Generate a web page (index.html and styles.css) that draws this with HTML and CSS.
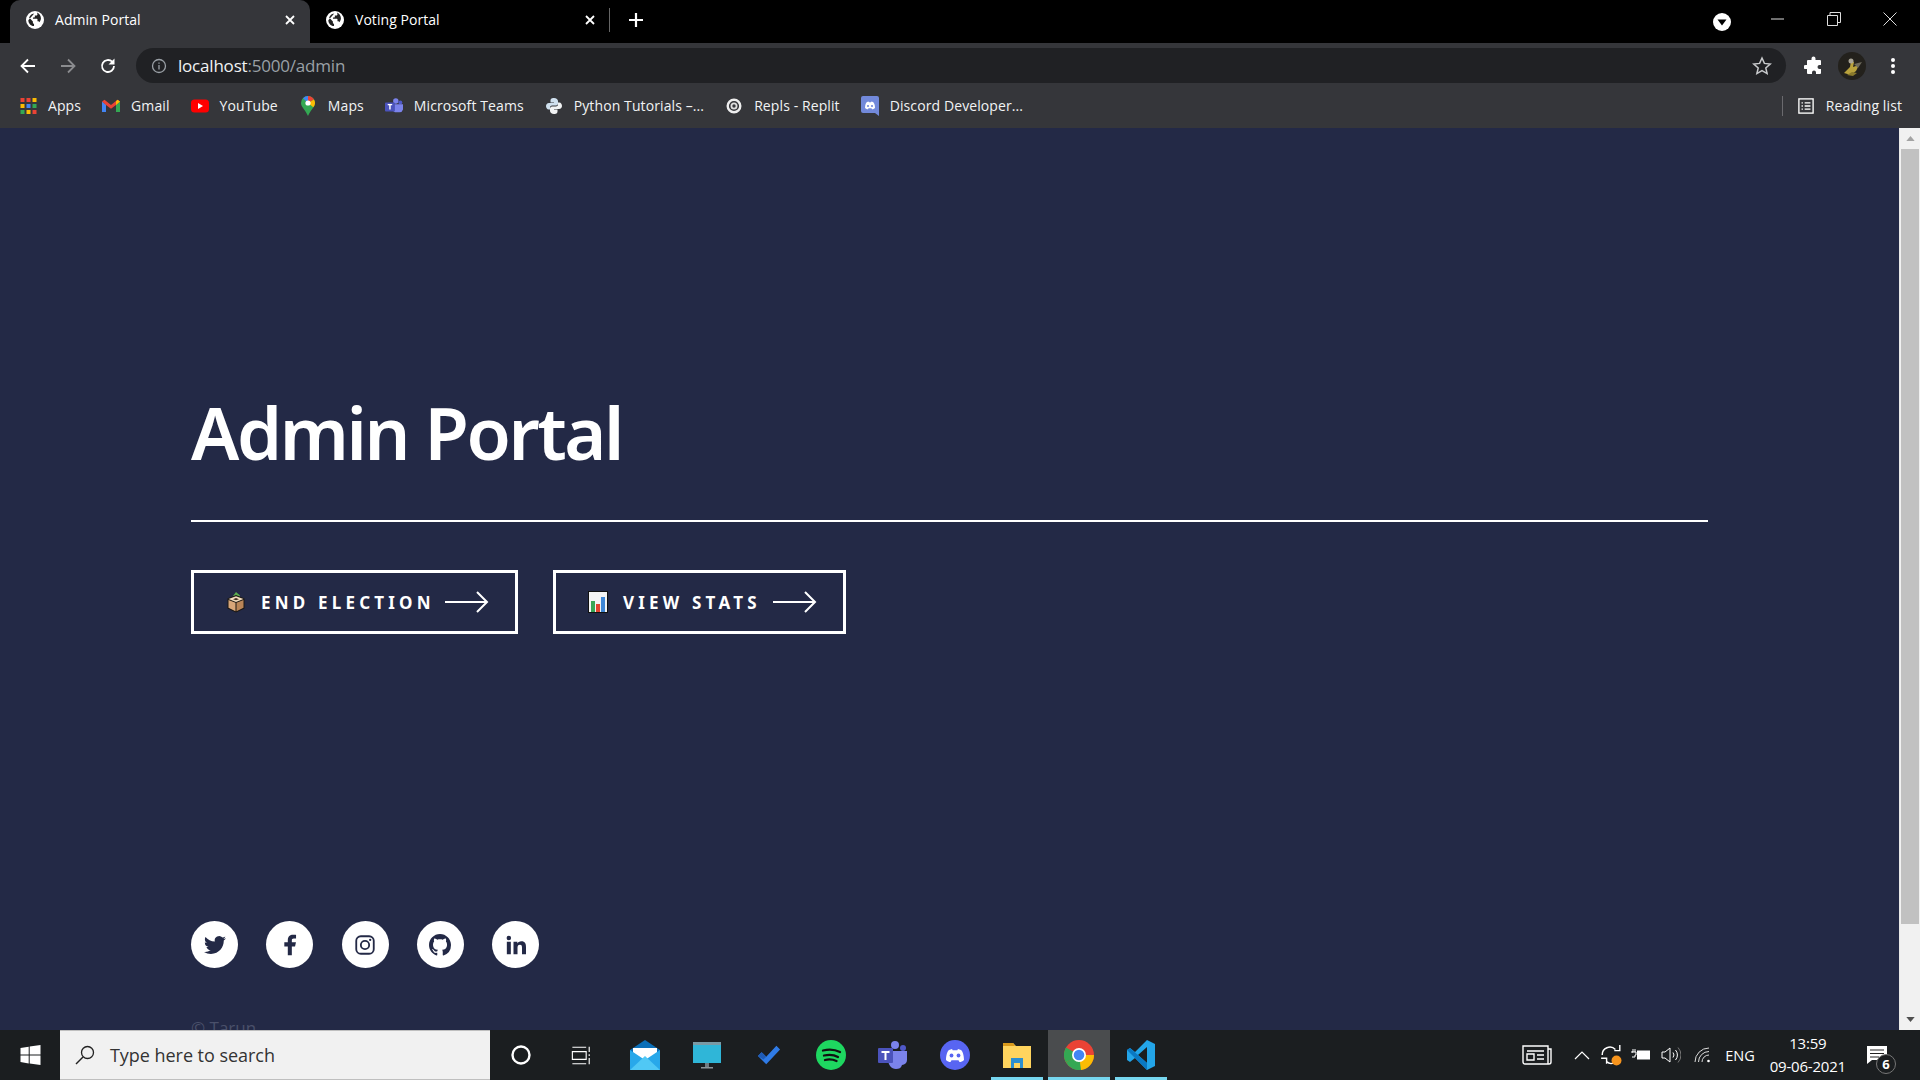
FILE: index.html
```html
<!DOCTYPE html>
<html lang="en">
<head>
<meta charset="utf-8">
<title>Admin Portal</title>
<link rel="stylesheet" href="styles.css">
</head>
<body>
<svg class="defs" width="0" height="0" aria-hidden="true">
  <symbol id="globe" viewBox="0 0 24 24"><circle cx="12" cy="12" r="12" fill="#fff"/><path fill="#222" d="M11 3.200c-1.800.2-3.600 1-4.900 2.300-.9 1-1.600 2-2 3.200l2.300 2.400 2.800 2.900v1.600c0 .8.700 1.500 1.500 1.500v3C6 19.700 3.200 16.300 3.100 12.300M15.200 3.900v.6c0 .9-.8 1.600-1.700 1.600h-1.700v1.700c0 .5-.4.800-.8.800H9.300v1.700h5.200c.5 0 .8.400.8.800v2.600h.9c.8 0 1.400.5 1.600 1.200 1.300-1.400 2.100-3.200 2.100-5.200 0-3.500-2.100-6.500-5.100-7.800z"/></symbol>
</svg>

<header class="chrome">
  <div class="tabstrip">
    <div class="tab tab-active">
      <svg class="tab-icon"><use href="#globe"/></svg>
      <span class="tab-title">Admin Portal</span>
      <svg class="tab-x" viewBox="0 0 10 10"><path d="M1 1l8 8M9 1L1 9"/></svg>
    </div>
    <div class="tab">
      <svg class="tab-icon"><use href="#globe"/></svg>
      <span class="tab-title">Voting Portal</span>
      <svg class="tab-x" viewBox="0 0 10 10"><path d="M1 1l8 8M9 1L1 9"/></svg>
    </div>
    <div class="tab-sep"></div>
    <svg class="tab-plus" viewBox="0 0 16 16"><path d="M8 1v14M1 8h14"/></svg>
    <div class="strip-fill"></div>
    <svg class="tab-search" viewBox="0 0 18 18"><circle cx="9" cy="9" r="9" fill="#fff"/><path d="M4.500 6.500h9L9 12.500z" fill="#000"/></svg>
    <div class="winctl">
      <svg viewBox="0 0 14 14"><path d="M0 7h13"/></svg>
      <svg viewBox="0 0 14 14"><path d="M.5 3.500h10v10H.5zM3 3.500V.5h10.500v10H10.500"/></svg>
      <svg viewBox="0 0 14 14"><path d="M.5.5l13 13M13.500.5l-13 13"/></svg>
    </div>
  </div>

  <div class="toolbar">
    <svg class="nav" viewBox="0 0 18 18"><path d="M16 9H3M9 2.500L2.500 9 9 15.500"/></svg>
    <svg class="nav nav-off" viewBox="0 0 18 18"><path d="M2 9h13M9 2.500L15.500 9 9 15.500"/></svg>
    <svg class="nav" viewBox="0 0 18 18"><path d="M15 9a6 6 0 1 1-1.800-4.300"/><path class="solid" d="M15.500 1.500v6h-6z"/></svg>
    <div class="omnibox">
      <svg class="info" viewBox="0 0 16 16"><circle cx="8" cy="8" r="6.500"/><path d="M8 7v4.500M8 4.500v1.300"/></svg>
      <span class="url">localhost<span class="url-dim">:5000/admin</span></span>
      <svg class="star" viewBox="0 0 20 20"><path d="M10 2l2.400 5.400 5.800.6-4.400 3.900 1.300 5.700L10 14.700l-5.100 2.900 1.300-5.700L1.800 8l5.800-.6z"/></svg>
    </div>
    <svg class="puzzle" viewBox="0 0 20 20"><path fill="#fff" d="M7.500 2.500a2 2 0 0 1 4 0V4H16a1 1 0 0 1 1 1v4h-1.500a2 2 0 0 0 0 4H17v4a1 1 0 0 1-1 1h-4v-1.500a2 2 0 0 0-4 0V18H4a1 1 0 0 1-1-1v-4H1.500a2 2 0 0 1 0-4H3V5a1 1 0 0 1 1-1h3.500z"/></svg>
    <svg class="avatar" viewBox="0 0 28 28"><circle cx="14" cy="14" r="14" fill="#23211c"/><path d="M6 21l6-6 1-6 3 1-1 5 6-2-3 6-5 4z" fill="#b9a23c"/><path d="M9 23l5-3 5 1-4 3z" fill="#8a7a2c"/><circle cx="13" cy="9" r="2.500" fill="#a8a496"/><path d="M16 12l8-2-4 6z" fill="#6d6a5c"/></svg>
    <svg class="kebab" viewBox="0 0 6 18"><circle cx="3" cy="3" r="2"/><circle cx="3" cy="9" r="2"/><circle cx="3" cy="15" r="2"/></svg>
  </div>

  <nav class="bookmarks">
    <a class="bm bm-apps"><svg viewBox="0 0 16 16"><rect x="0" y="0" width="4" height="4" fill="#ea4335"/><rect x="6" y="0" width="4" height="4" fill="#ea4335"/><rect x="12" y="0" width="4" height="4" fill="#fbbc04"/><rect x="0" y="6" width="4" height="4" fill="#fbbc04"/><rect x="6" y="6" width="4" height="4" fill="#4285f4"/><rect x="12" y="6" width="4" height="4" fill="#34a853"/><rect x="0" y="12" width="4" height="4" fill="#34a853"/><rect x="6" y="12" width="4" height="4" fill="#fbbc04"/><rect x="12" y="12" width="4" height="4" fill="#ea4335"/></svg>Apps</a>
    <a class="bm"><svg viewBox="0 0 18 14"><path d="M0 2.500V13h4V5.500z" fill="#4285f4"/><path d="M18 2.500V13h-4V5.500z" fill="#34a853"/><path d="M0 2.500L2.500.8 9 6l6.500-5.200L18 2.500 14 6 9 9.800 4 6z" fill="#ea4335"/><path d="M14 2.200l1.500-1.400L18 2.500 14 6z" fill="#fbbc04"/></svg>Gmail</a>
    <a class="bm"><svg viewBox="0 0 18 14"><rect width="18" height="13" y=".5" rx="3.500" fill="#f00"/><path d="M7 4l5 3-5 3z" fill="#fff"/></svg>YouTube</a>
    <a class="bm"><svg class="bm-tall" viewBox="0 0 14 20"><path d="M7 0a7 7 0 0 1 7 7c0 4-4.500 7-7 13C4.500 14 0 11 0 7a7 7 0 0 1 7-7z" fill="#34a853"/><path d="M2 2.200A7 7 0 0 1 7 0v7z" fill="#4285f4"/><path d="M7 0a7 7 0 0 1 6 3.500L7 7z" fill="#ea4335"/><path d="M13 3.500A7 7 0 0 1 14 7c0 1.500-.7 3-1.700 4.300L7 7z" fill="#fbbc04"/><circle cx="7" cy="7" r="2.600" fill="#fff"/></svg>Maps</a>
    <a class="bm"><svg class="bm-tall" viewBox="0 0 20 18"><circle cx="12" cy="3.500" r="3" fill="#7b83eb"/><circle cx="17" cy="5" r="2.200" fill="#5059c9"/><path d="M8 7h12v6a4 4 0 0 1-4 3h-3a5 5 0 0 1-5-4z" fill="#7b83eb"/><rect y="5" width="11" height="10" rx="1" fill="#4b53bc"/><path d="M3 7.500h5M5.500 7.500v5.500" stroke="#fff" stroke-width="1.600" fill="none"/></svg>Microsoft Teams</a>
    <a class="bm"><svg viewBox="0 0 16 16"><path d="M8 0C5 0 4.500 1.200 4.500 3v1.500H8V5H3C1 5 0 6.500 0 8s1 3.500 2.700 3.500H4V9.500C4 8.300 5 7.500 6 7.500h4c1 0 2-1 2-2V3c0-1.500-1.500-3-4-3z" fill="#cfe0ee"/><path d="M8 16c3 0 3.500-1.200 3.500-3v-1.500H8V11h5c2 0 3-1.500 3-3s-1-3.500-2.700-3.500H12v2c0 1.200-1 2-2 2H6c-1 0-2 1-2 2V13c0 1.500 1.500 3 4 3z" fill="#f1f3f4"/></svg>Python Tutorials –...</a>
    <a class="bm"><svg viewBox="0 0 16 16"><circle cx="8" cy="8" r="6.300" fill="none" stroke="#eee" stroke-width="2.400"/><circle cx="8" cy="8" r="2.600" fill="none" stroke="#ddd" stroke-width="1.800"/></svg>Repls - Replit</a>
    <a class="bm"><svg class="bm-tall" viewBox="0 0 18 20"><path d="M2 0h14a2 2 0 0 1 2 2v18l-4-3H2a2 2 0 0 1-2-2V2a2 2 0 0 1 2-2z" fill="#7289da"/><path d="M4 12c0-3 1-5.500 2-6l1.500-.5.500.800h2l.5-.800 1.500.5c1 .5 2 3 2 6-1 1-2 1.300-3 1.300l-.5-1h-3l-.5 1c-1 0-2-.300-3-1.300z" fill="#fff"/><circle cx="7" cy="10" r="1.100" fill="#7289da"/><circle cx="11" cy="10" r="1.100" fill="#7289da"/></svg>Discord Developer...</a>
    <div class="bm-fill"></div>
    <div class="bm-sep"></div>
    <a class="bm bm-reading"><svg viewBox="0 0 18 18"><rect x="1" y="1" width="16" height="16" fill="none" stroke="#fff" stroke-width="1.500"/><path d="M4 5.500h1.500M7.500 5.500H14M4 9h1.500M7.500 9H14M4 12.500h1.500M7.500 12.500H14" stroke="#fff" stroke-width="1.500"/></svg>Reading list</a>
  </nav>
</header>

<div class="viewport">
  <main class="page">
    <h1 class="title">Admin Portal</h1>
    <hr class="rule">
    <div class="actions">
      <a class="btn btn-end">
        <svg class="emoji" viewBox="0 0 20 22"><path d="M10 1l4 3.500-2 5.500-3-1-2-4z" fill="#5cae4f"/><path d="M1.500 7.500L10 4l8.500 3.500v10L10 21.500l-8.500-4z" fill="#1b1713"/><path d="M2.500 8L10 5.200 17.500 8 10 11z" fill="#f3dcbd"/><path d="M2.500 9l7 2.800v8.400l-7-3.400z" fill="#d8a679"/><path d="M10.500 11.800l7-2.800v7.800l-7 3.400z" fill="#b98558"/><path d="M7 8.200l3-1.200 3 1.200-3 1.100z" fill="#3f2e20"/></svg>
        <span class="btn-label">END ELECTION</span>
        <svg class="arrow" viewBox="0 0 44 22"><path d="M0 11h42M32 1l10 10-10 10"/></svg>
      </a>
      <a class="btn btn-stats">
        <svg class="emoji" viewBox="0 0 20 22"><rect width="20" height="22" fill="#111"/><rect x="1" y="1" width="18" height="20" fill="#f4f4f4"/><rect x="3" y="10" width="4" height="11" fill="#3aa655"/><rect x="8" y="13" width="4" height="8" fill="#e2432f"/><rect x="13" y="6" width="4" height="15" fill="#3f87d6"/></svg>
        <span class="btn-label">VIEW STATS</span>
        <svg class="arrow" viewBox="0 0 44 22"><path d="M0 11h42M32 1l10 10-10 10"/></svg>
      </a>
    </div>
    <div class="socials">
      <a class="social"><svg class="s-tw" viewBox="0 0 24 24"><path d="M23.953 4.570a10 10 0 0 1-2.825.775 4.958 4.958 0 0 0 2.163-2.723c-.951.555-2.005.959-3.127 1.184a4.920 4.920 0 0 0-8.384 4.482C7.690 8.095 4.067 6.130 1.640 3.162a4.822 4.822 0 0 0-.666 2.475c0 1.710.870 3.213 2.188 4.096a4.904 4.904 0 0 1-2.228-.616v.060a4.923 4.923 0 0 0 3.946 4.827 4.996 4.996 0 0 1-2.212.085 4.936 4.936 0 0 0 4.604 3.417 9.867 9.867 0 0 1-6.102 2.105c-.390 0-.779-.023-1.170-.067a13.995 13.995 0 0 0 7.557 2.209c9.053 0 13.998-7.496 13.998-13.985 0-.210 0-.420-.015-.630A9.935 9.935 0 0 0 24 4.590z"/></svg></a>
      <a class="social"><svg class="s-fb" viewBox="0 0 24 24"><path d="M14 13.500h3.500l1-4.500H14V7c0-1.200.4-2 2.200-2h2.400V1.100C18.200 1 16.800.9 15.300.9 12 .9 9.600 2.900 9.600 6.600V9H5.800v4.500h3.800V23.100H14z"/></svg></a>
      <a class="social"><svg class="s-ig" viewBox="0 0 24 24"><rect x="1.500" y="1.500" width="21" height="21" rx="5.500"/><circle cx="12" cy="12" r="5"/><circle class="dot" cx="18.200" cy="5.800" r="1.400"/></svg></a>
      <a class="social"><svg class="s-gh" viewBox="0 0 16 16"><path d="M8 0C3.580 0 0 3.580 0 8c0 3.540 2.290 6.530 5.470 7.590.4.070.55-.170.55-.380 0-.190-.010-.820-.010-1.490-2.010.370-2.530-.490-2.690-.940-.090-.230-.480-.940-.820-1.130-.280-.150-.680-.520-.010-.530.630-.010 1.080.580 1.230.820.720 1.210 1.870.870 2.330.660.070-.520.280-.870.510-1.070-1.780-.200-3.640-.890-3.640-3.950 0-.870.310-1.590.820-2.150-.080-.200-.360-1.020.080-2.120 0 0 .670-.210 2.200.820.640-.180 1.320-.270 2-.270.680 0 1.360.090 2 .270 1.530-1.040 2.200-.820 2.200-.820.440 1.100.160 1.920.080 2.120.510.560.820 1.270.820 2.150 0 3.070-1.870 3.750-3.650 3.950.290.250.540.730.540 1.480 0 1.070-.010 1.930-.010 2.200 0 .210.150.460.550.380A8.013 8.013 0 0 0 16 8c0-4.420-3.580-8-8-8z"/></svg></a>
      <a class="social"><svg class="s-in" viewBox="0 0 24 24"><path d="M1 8h4.800v15H1zM3.400 1a2.700 2.700 0 1 1 0 5.400 2.700 2.700 0 0 1 0-5.400zM9 8h4.600v2.100c.8-1.300 2.500-2.500 4.800-2.500 4.600 0 5.600 3 5.600 7V23h-4.800v-7.400c0-1.800 0-4-2.500-4s-2.900 1.900-2.900 3.900V23H9z"/></svg></a>
    </div>
    <p class="copyright">© Tarun</p>
  </main>
  <aside class="scrollbar">
    <div class="sb-btn"><svg viewBox="0 0 10 6"><path d="M5 0l5 6H0z"/></svg></div>
    <div class="sb-thumb"></div>
    <div class="sb-track"></div>
    <div class="sb-btn sb-btn-down"><svg viewBox="0 0 10 6"><path d="M0 0h10L5 6z"/></svg></div>
  </aside>
</div>

<footer class="taskbar">
  <div class="start"><svg viewBox="0 0 20 20"><path fill="#fff" d="M0 2.900L8.200 1.700v7.900H0zM9.200 1.600L20 0v9.600H9.200zM0 10.600h8.200v7.900L0 17.100zM9.200 10.600H20V20L9.200 18.400z"/></svg></div>
  <div class="search">
    <svg viewBox="0 0 20 20"><circle cx="12.500" cy="7.500" r="6" fill="none" stroke="#222" stroke-width="1.300"/><path d="M8 12l-7 7" stroke="#222" stroke-width="1.500"/></svg>
    <span>Type here to search</span>
  </div>
  <div class="tb-icons">
    <div class="tb"><svg viewBox="0 0 22 22"><circle cx="11" cy="11" r="8.500" fill="none" stroke="#fff" stroke-width="2.400"/></svg></div>
    <div class="tb"><svg class="tb-tv" viewBox="0 0 22 22" fill="none" stroke="#fff" stroke-width="1.300"><path d="M1 1.500h16M1 20.500h16M1 6.500h16v9H1zM20.500 1v6M20.500 9.500v2M20.500 14v7"/></svg></div>
    <div class="tb"><svg class="tb-lg" viewBox="0 0 30 30"><path d="M0 10L15 0l15 10v2H0z" fill="#0b6fb8"/><path d="M3 8h24v14H3z" fill="#fff"/><path d="M0 10l15 10 15-10v20H0z" fill="#28a8ea"/><path d="M0 30l15-14 15 14z" fill="#50c8f5"/></svg></div>
    <div class="tb"><svg class="tb-lg" viewBox="0 0 30 30"><rect x="1" y="2" width="28" height="21" fill="#2fb6d8"/><rect x="1" y="2" width="28" height="3" fill="#7a9aa5"/><rect x="13" y="23" width="4" height="4" fill="#6f7a80"/><rect x="9" y="27" width="12" height="1.500" fill="#8b9498"/></svg></div>
    <div class="tb"><svg viewBox="0 0 26 22"><path d="M1 12l4-4 5 5L21 1l4 4-15 16z" fill="#2f7be6"/><path d="M1 12l4-4 5 5-3 3z" fill="#1f5bb5"/></svg></div>
    <div class="tb"><svg class="tb-lg" viewBox="0 0 30 30"><circle cx="15" cy="15" r="15" fill="#1ed760"/><path d="M7 10.500c6-1.500 12-1 17 1.500M8 15.500c5-1.200 10-.800 14 1.500M9 20c4-1 8-.600 11.500 1" fill="none" stroke="#111" stroke-width="2.300" stroke-linecap="round"/></svg></div>
    <div class="tb"><svg class="tb-lg" viewBox="0 0 30 30"><circle cx="17" cy="5" r="4" fill="#7b83eb"/><circle cx="25" cy="8" r="3" fill="#5059c9"/><path d="M10 11h19v9a5 5 0 0 1-5 5c-1 3-3 4-6 4-5 0-7-4-8-8z" fill="#7b83eb"/><rect y="8" width="15" height="15" rx="1" fill="#4b53bc"/><path d="M3.500 12h8M7.500 12v8" stroke="#fff" stroke-width="2" fill="none"/></svg></div>
    <div class="tb"><svg class="tb-lg" viewBox="0 0 30 30"><circle cx="15" cy="15" r="15" fill="#5865f2"/><path d="M6 20c0-5 1.500-9 3-10l3-1 .7 1.300h4.600L18 9l3 1c1.500 1 3 5 3 10-1.500 1.500-3 2-4.500 2l-1-1.800h-7l-1 1.800c-1.500 0-3-.500-4.500-2z" fill="#fff"/><circle cx="11.500" cy="15.500" r="1.900" fill="#5865f2"/><circle cx="18.500" cy="15.500" r="1.900" fill="#5865f2"/></svg></div>
    <div class="tb tb-open"><svg class="tb-lg" viewBox="0 0 30 28"><path d="M1 2h10l3 3h15v22H1z" fill="#ffd45e"/><path d="M1 2h10l2 3H1z" fill="#d99a1c"/><path d="M9 17h12v10h-3v-5h-6v5H9z" fill="#2c8fd0"/></svg></div>
    <div class="tb tb-open tb-active"><svg class="tb-lg" viewBox="0 0 30 30"><circle cx="15" cy="15" r="15" fill="#ea4335"/><path d="M15 15L2 22.500A15 15 0 0 1 2 7.500z" fill="#34a853"/><path d="M15 15h15a15 15 0 0 1-13 15l-4-2z" fill="#fbbc04"/><path d="M2 22.500L15 15l2 15A15 15 0 0 1 2 22.500z" fill="#34a853"/><circle cx="15" cy="15" r="7" fill="#fff"/><circle cx="15" cy="15" r="5.300" fill="#4285f4"/></svg></div>
    <div class="tb tb-open"><svg class="tb-lg" viewBox="0 0 30 30"><path d="M21 0l8 4v22l-8 4-12-12-5 4-3-2v-10l3-2 5 4z" fill="#23a5e8"/><path d="M21 7v16l-9-8z" fill="#1b1e20"/><path d="M1 10l3-2 17 15v7z" fill="#0a78c2"/></svg></div>
  </div>
  <div class="tb-fill"></div>
  <div class="tray">
    <svg class="tray-news" viewBox="0 0 30 20" fill="none" stroke="#fff" stroke-width="1.400"><path d="M1 1h25v18H3a2 2 0 0 1-2-2zM26 4h3v13a2 2 0 0 1-2 2h-1"/><path d="M5 6h17M5 9h7v6H5zM15 10h7M15 14h7"/></svg>
    <svg class="tray-up" viewBox="0 0 16 10" fill="none" stroke="#fff" stroke-width="1.200"><path d="M1 9l7-7 7 7"/></svg>
    <span class="tray-sync"><svg viewBox="0 0 20 20" fill="none" stroke="#fff" stroke-width="1.300"><path d="M2 10a7 7 0 0 1 12-5M18 1v5h-5M1 13h5v5M6 16a6 6 0 0 0 7 1"/><circle cx="15" cy="15" r="4.500" fill="#f7941d" stroke="none"/></svg></span>
    <svg class="tray-batt" viewBox="0 0 20 12"><path d="M0 3h2V0M4 3V0M1 3h4v3H4v2H1" fill="none" stroke="#fff"/><rect x="6" y="1.500" width="13" height="9" fill="#fff"/></svg>
    <svg class="tray-vol" viewBox="0 0 20 18" fill="none" stroke="#fff" stroke-width="1"><path d="M1 6h3l5-4v14l-5-4H1z"/><path d="M12 6.500a4 4 0 0 1 0 5M14.500 4a7.500 7.500 0 0 1 0 10"/><path d="M17 1.500a11 11 0 0 1 0 15" stroke="#777"/></svg>
    <svg class="tray-wifi" viewBox="0 0 18 16" fill="none" stroke="#ddd" stroke-width="1"><path d="M1 15A14 14 0 0 1 15 1M4.500 15A10.500 10.500 0 0 1 15 4.500M8 15a7 7 0 0 1 7-7"/><circle cx="14.500" cy="14" r="1.300" fill="#fff" stroke="none"/></svg>
    <span class="tray-lang">ENG</span>
    <div class="clock"><span>13:59</span><span>09-06-2021</span></div>
    <div class="notify"><svg viewBox="0 0 20 18"><path fill="#fff" d="M0 0h20v14H5l-5 4z"/><path d="M3 4h14M3 7.500h14M3 11h9" stroke="#222" stroke-width="1.200"/></svg><span class="badge">6</span></div>
  </div>
</footer>
</body>
</html>
```

FILE: styles.css
```css
* { box-sizing: border-box; }
html, body { height: 100%; margin: 0; }
body {
  display: flex;
  flex-direction: column;
  height: 1080px;
  overflow: hidden;
  font-family: "Open Sans", "Noto Sans", sans-serif;
  background: #232946;
}
.defs { position: absolute; }

/* browser chrome */
.chrome { flex: none; height: 128px; background: #35363a; color: #fff; }
.tabstrip { display: flex; align-items: center; height: 43px; background: #000; padding-left: 10px; }
.tab { display: flex; align-items: center; width: 300px; height: 43px; padding: 0 0 4px 16px; }
.tab-active { background: #35363a; border-radius: 10px 10px 0 0; }
.tab-icon { width: 18px; height: 18px; flex: none; }
.tab-title { flex: 1; margin-left: 11px; font-size: 14px; letter-spacing: .05px; }
.tab-x { width: 10px; height: 10px; margin-right: 15px; fill: none; stroke: #fff; stroke-width: 1.800; }
.tab-sep { width: 1px; height: 24px; background: #666; margin-left: -1px; margin-bottom: 3px; }
.tab-plus { width: 16px; height: 16px; margin: 0 0 3px 18px; fill: none; stroke: #fff; stroke-width: 2.200; }
.strip-fill { flex: 1; }
.tab-search { width: 18px; height: 18px; margin-top: 1px; }
.winctl { display: flex; align-items: center; gap: 42px; margin: 0 23px 6px 40px; }
.winctl svg { width: 14px; height: 14px; fill: none; stroke: #ddd; stroke-width: 1; }

.toolbar { display: flex; align-items: center; height: 40px; padding: 5px 0 0 19px; }
.nav { width: 18px; height: 18px; flex: none; margin-right: 22px; fill: none; stroke: #fff; stroke-width: 1.800; }
.nav-off { stroke: #8b8c8f; }
.nav:nth-of-type(3) { margin-right: 18px; }
.solid { fill: #fff; stroke: none; }
.omnibox {
  display: flex; align-items: center; flex: none;
  width: 1650px; height: 35px; margin-left: 1px;
  padding: 0 14px 0 15px;
  background: #202124; border-radius: 18px;
}
.info { width: 16px; height: 16px; fill: none; stroke: #9aa0a6; stroke-width: 1.300; }
.url { flex: 1; margin-left: 11px; font-size: 17px; letter-spacing: -.2px; color: #f1f3f4; }
.url-dim { color: #9aa0a6; }
.star { width: 20px; height: 20px; fill: none; stroke: #c8cacc; stroke-width: 1.500; }
.puzzle { width: 20px; height: 20px; margin-left: 18px; flex: none; }
.avatar { width: 28px; height: 28px; margin-left: 14px; flex: none; }
.kebab { width: 6px; height: 18px; margin-left: 24px; fill: #fff; flex: none; }

.bookmarks { display: flex; align-items: center; height: 45px; padding: 0 18px 0 20px; font-size: 14px; letter-spacing: .1px; }
.bm { display: flex; align-items: center; gap: 11px; margin-right: 21px; color: #f1f3f4; white-space: nowrap; }
.bm svg { width: 18px; height: 16px; flex: none; }
.bm svg.bm-tall { height: 20px; }
.bm-apps svg { width: 17px; }
.bm-fill { flex: 1; }
.bm-sep { width: 1px; height: 20px; background: #6a6a6e; margin-right: 14px; }
.bm-reading { margin-right: 0; gap: 11px; }

/* page */
.viewport { flex: none; display: flex; height: 902px; overflow: hidden; }
.page { flex: 1; min-width: 0; padding: 0 191px 0 191px; color: #fff; }
.title {
  margin: 255px 0 0;
  font-family: "Noto Sans", sans-serif;
  font-size: 72px;
  font-weight: 600;
  line-height: 98px;
  letter-spacing: -2.350px;
}
.rule { height: 2px; margin: 39px 0 0; border: 0; background: #fff; }
.actions { display: flex; gap: 35px; margin-top: 48px; }
.btn { display: flex; align-items: center; height: 64px; border: 3px solid #fff; padding: 0 27px 0 32px; }
.emoji { width: 20px; height: 22px; flex: none; margin-right: 15px; }
.btn-label { font-family: "Noto Sans", sans-serif; font-size: 17px; font-weight: 700; letter-spacing: 4.200px; white-space: nowrap; }
.arrow { width: 44px; height: 22px; flex: none; margin-left: 10px; fill: none; stroke: #fff; stroke-width: 2; }
.btn-end { width: 327px; }
.btn-stats { width: 293px; }
.btn-stats .arrow { margin-left: 12px; }
.socials { display: flex; gap: 28.250px; margin-top: 287px; }
.social { display: flex; align-items: center; justify-content: center; width: 47px; height: 47px; border-radius: 50%; background: #fff; }
.social svg { fill: #232946; }
.s-tw { width: 22px; height: 22px; }
.s-fb { width: 22px; height: 22px; }
.s-ig { width: 20px; height: 20px; stroke: #232946; stroke-width: 2.200; }
.social .s-ig { fill: none; }
.s-ig .dot { fill: #232946; stroke: none; }
.s-gh { width: 22px; height: 22px; }
.s-in { width: 20px; height: 20px; }
.copyright { margin: 49px 0 0; font-size: 17px; line-height: 22px; color: #4a506a; }

.scrollbar { flex: none; width: 21px; display: flex; flex-direction: column; background: #f1f1f1; border-left: 1px solid #e8e8e8; }
.sb-btn { flex: none; height: 21px; display: flex; align-items: center; justify-content: center; }
.sb-btn svg { width: 9px; height: 5px; fill: #a3a3a3; }
.sb-btn-down svg { fill: #505050; }
.sb-thumb { flex: none; height: 775px; background: #c1c1c1; margin: 0 1px; }
.sb-track { flex: 1; }

/* taskbar */
.taskbar { flex: none; display: flex; align-items: stretch; height: 50px; background: #1b1e20; color: #fff; }
.start { flex: none; width: 60px; display: flex; align-items: center; justify-content: center; }
.start svg { width: 21px; height: 20px; }
.search { flex: none; display: flex; align-items: center; width: 430px; background: #f1f1f1; border: 1px solid #bfbfbf; border-width: 1px 0 1px 0; color: #333; padding-left: 15px; font-size: 18px; letter-spacing: -.04px; }
.search svg { width: 20px; height: 20px; flex: none; margin-right: 15px; }
.tb-icons { display: flex; }
.tb { position: relative; width: 62px; display: flex; align-items: center; justify-content: center; height: 50px; }
.tb svg { width: 24px; height: 22px; }
.tb svg.tb-lg { width: 30px; height: 30px; }
.tb svg.tb-tv { width: 20px; height: 19px; margin-right: 5px; }
.tb-open::after { content: ""; position: absolute; left: 5px; right: 5px; bottom: 0; height: 3px; background: #76d6ef; }
.tb-active { background: #4a4c4e; }
.tb-active::after { left: 0; right: 0; }
.tb-fill { flex: 1; }
.tray { display: flex; align-items: center; flex: none; padding-right: 23px; font-size: 15px; }
.tray-news { width: 30px; height: 20px; }
.tray-up { width: 16px; height: 10px; margin-left: 22px; }
.tray-sync { display: flex; margin-left: 10px; }
.tray-sync svg { width: 22px; height: 22px; }
.tray-batt { width: 20px; height: 12px; margin-left: 9px; }
.tray-vol { width: 20px; height: 18px; margin-left: 10px; }
.tray-wifi { width: 18px; height: 16px; margin-left: 13px; }
.tray-lang { margin-left: 13px; font-size: 14.500px; }
.clock { display: flex; flex-direction: column; align-items: center; margin-left: 15px; font-size: 15px; line-height: 23px; letter-spacing: -.2px; }
.notify { position: relative; width: 22px; height: 18px; margin-left: 21px; margin-right: 8px; }
.notify svg { width: 20px; height: 18px; display: block; }
.badge { position: absolute; left: 9px; top: 8px; width: 20px; height: 20px; border-radius: 50%; background: #1b1e20; border: 1px solid #777; font-size: 13px; font-weight: 700; line-height: 18px; text-align: center; }
```
